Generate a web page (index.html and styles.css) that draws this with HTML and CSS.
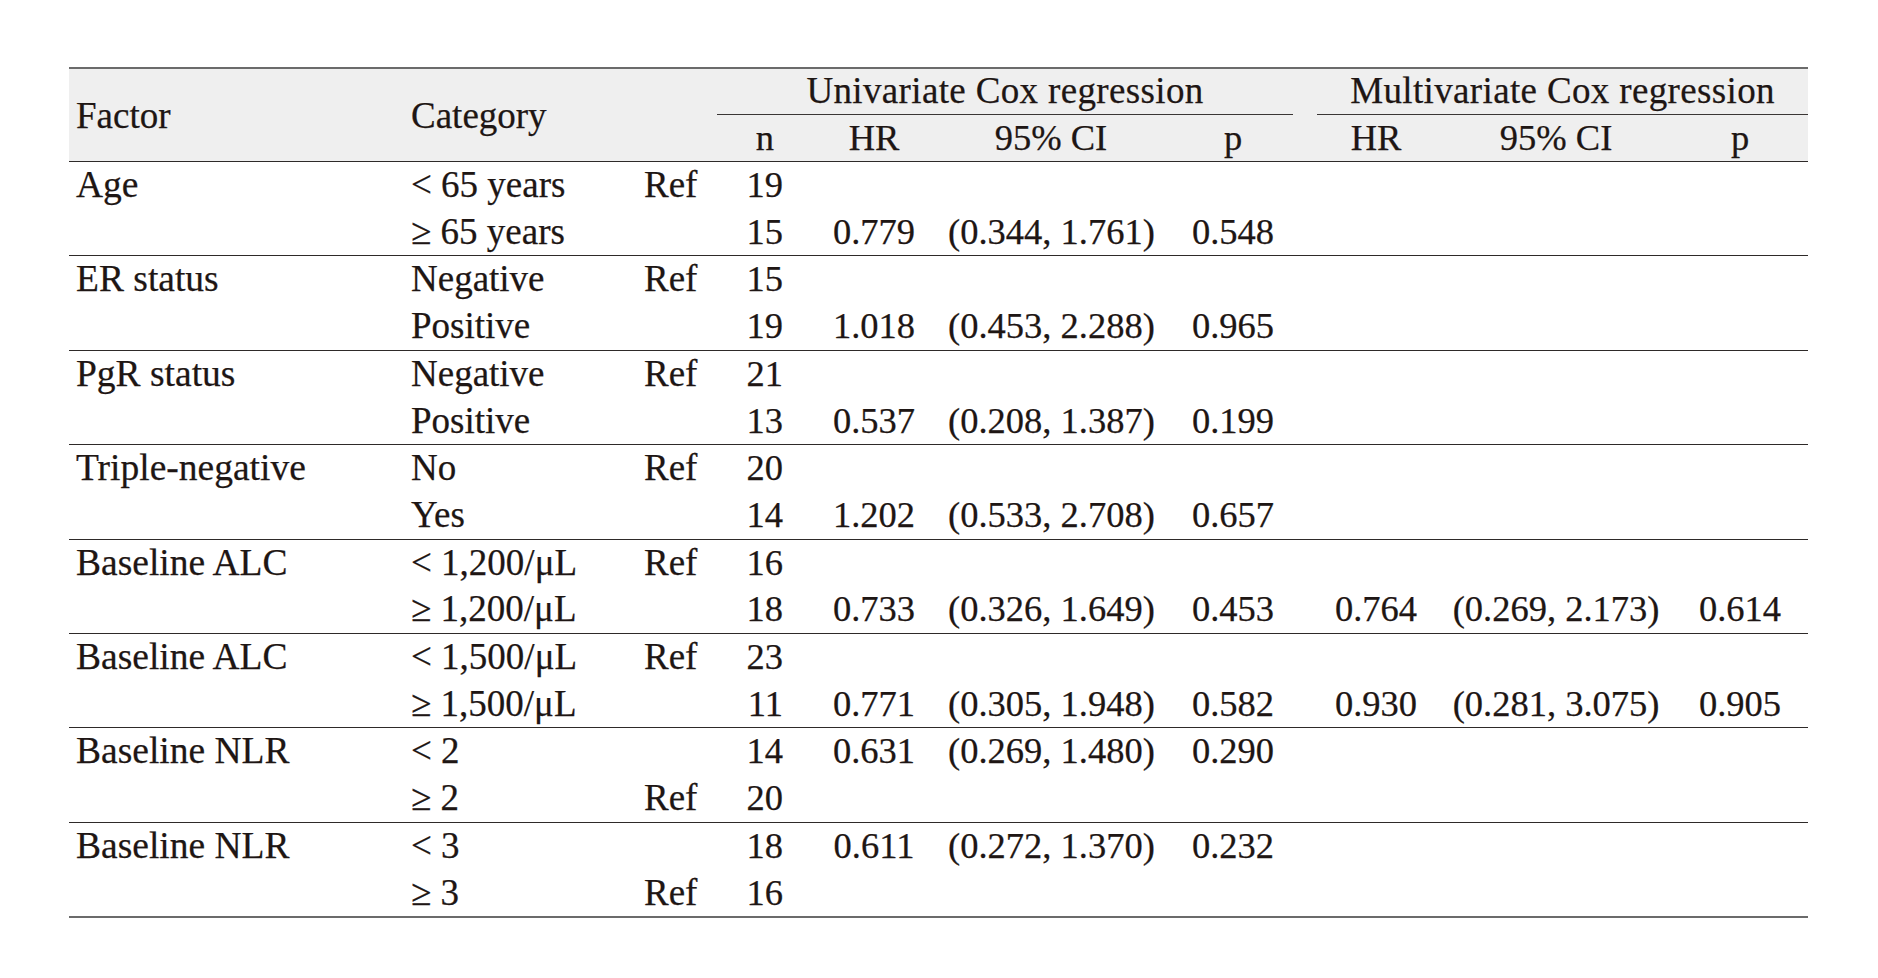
FILE: index.html
```html
<!DOCTYPE html>
<html lang="en">
<head>
<meta charset="utf-8">
<title>Cox regression table</title>
<link rel="stylesheet" href="styles.css">
</head>
<body>
<div class="page">
<table class="cox">
  <colgroup>
    <col class="c-factor"><col class="c-cat"><col class="c-ref"><col class="c-n">
    <col class="c-hr"><col class="c-ci"><col class="c-p">
    <col class="c-mhr"><col class="c-mci"><col class="c-mp">
  </colgroup>
  <thead>
    <tr class="h1">
      <th rowspan="2" class="lab factor">Factor</th>
      <th rowspan="2" class="lab cat">Category</th>
      <th rowspan="2" class="lab"></th>
      <th colspan="4" class="grp"><div class="grp-line uni">Univariate Cox regression</div></th>
      <th colspan="3" class="grp"><div class="grp-line multi">Multivariate Cox regression</div></th>
    </tr>
    <tr class="h2">
      <th class="num-n">n</th>
      <th>HR</th>
      <th>95% CI</th>
      <th class="p-uni">p</th>
      <th>HR</th>
      <th>95% CI</th>
      <th>p</th>
    </tr>
  </thead>
  <tbody>
    <tr><td class="factor">Age</td><td class="cat">&lt; 65 years</td><td class="ref">Ref</td><td class="n">19</td><td></td><td></td><td class="p-uni"></td><td></td><td></td><td></td></tr>
    <tr class="end"><td class="factor"></td><td class="cat">&ge; 65 years</td><td class="ref"></td><td class="n">15</td><td>0.779</td><td>(0.344, 1.761)</td><td class="p-uni">0.548</td><td></td><td></td><td></td></tr>

    <tr><td class="factor">ER status</td><td class="cat">Negative</td><td class="ref">Ref</td><td class="n">15</td><td></td><td></td><td class="p-uni"></td><td></td><td></td><td></td></tr>
    <tr class="end"><td class="factor"></td><td class="cat">Positive</td><td class="ref"></td><td class="n">19</td><td>1.018</td><td>(0.453, 2.288)</td><td class="p-uni">0.965</td><td></td><td></td><td></td></tr>

    <tr><td class="factor">PgR status</td><td class="cat">Negative</td><td class="ref">Ref</td><td class="n">21</td><td></td><td></td><td class="p-uni"></td><td></td><td></td><td></td></tr>
    <tr class="end"><td class="factor"></td><td class="cat">Positive</td><td class="ref"></td><td class="n">13</td><td>0.537</td><td>(0.208, 1.387)</td><td class="p-uni">0.199</td><td></td><td></td><td></td></tr>

    <tr><td class="factor">Triple-negative</td><td class="cat">No</td><td class="ref">Ref</td><td class="n">20</td><td></td><td></td><td class="p-uni"></td><td></td><td></td><td></td></tr>
    <tr class="end"><td class="factor"></td><td class="cat">Yes</td><td class="ref"></td><td class="n">14</td><td>1.202</td><td>(0.533, 2.708)</td><td class="p-uni">0.657</td><td></td><td></td><td></td></tr>

    <tr><td class="factor">Baseline ALC</td><td class="cat">&lt; 1,200/μL</td><td class="ref">Ref</td><td class="n">16</td><td></td><td></td><td class="p-uni"></td><td></td><td></td><td></td></tr>
    <tr class="end"><td class="factor"></td><td class="cat">&ge; 1,200/μL</td><td class="ref"></td><td class="n">18</td><td>0.733</td><td>(0.326, 1.649)</td><td class="p-uni">0.453</td><td>0.764</td><td>(0.269, 2.173)</td><td>0.614</td></tr>

    <tr><td class="factor">Baseline ALC</td><td class="cat">&lt; 1,500/μL</td><td class="ref">Ref</td><td class="n">23</td><td></td><td></td><td class="p-uni"></td><td></td><td></td><td></td></tr>
    <tr class="end"><td class="factor"></td><td class="cat">&ge; 1,500/μL</td><td class="ref"></td><td class="n">11</td><td>0.771</td><td>(0.305, 1.948)</td><td class="p-uni">0.582</td><td>0.930</td><td>(0.281, 3.075)</td><td>0.905</td></tr>

    <tr><td class="factor">Baseline NLR</td><td class="cat">&lt; 2</td><td class="ref"></td><td class="n">14</td><td>0.631</td><td>(0.269, 1.480)</td><td class="p-uni">0.290</td><td></td><td></td><td></td></tr>
    <tr class="end"><td class="factor"></td><td class="cat">&ge; 2</td><td class="ref">Ref</td><td class="n">20</td><td></td><td></td><td class="p-uni"></td><td></td><td></td><td></td></tr>

    <tr><td class="factor">Baseline NLR</td><td class="cat">&lt; 3</td><td class="ref"></td><td class="n">18</td><td>0.611</td><td>(0.272, 1.370)</td><td class="p-uni">0.232</td><td></td><td></td><td></td></tr>
    <tr class="end last"><td class="factor"></td><td class="cat">&ge; 3</td><td class="ref">Ref</td><td class="n">16</td><td></td><td></td><td class="p-uni"></td><td></td><td></td><td></td></tr>
  </tbody>
</table>
</div>
</body>
</html>
```

FILE: styles.css
```css
html, body {
  margin: 0;
  padding: 0;
  background: #ffffff;
}

.page {
  padding: 67px 0 0 69px;
}

.cox {
  width: 1739px;
  table-layout: fixed;
  border-collapse: separate;
  border-spacing: 0;
  font-family: "Liberation Serif", "Times New Roman", serif;
  font-size: 36.5px;
  color: #1e1614;
  -webkit-text-stroke: 0.25px #1e1614;
}

.c-factor { width: 334px; }
.c-cat { width: 237px; }
.c-ref { width: 77px; }
.c-n { width: 83px; }
.c-hr { width: 148px; }
.c-ci { width: 206px; }
.c-p { width: 158px; }
.c-mhr { width: 128px; }
.c-mci { width: 232px; }
.c-mp { width: 136px; }

.cox th,
.cox td {
  padding: 0;
  font-weight: normal;
  white-space: nowrap;
  text-align: center;
}

.cox thead th {
  background: #efefef;
}

.h1 th {
  border-top: 2px solid #6b6b6b;
  vertical-align: bottom;
}

.h1 th.lab {
  vertical-align: middle;
  border-bottom: 1.5px solid #2e2a29;
  line-height: 47px;
  text-align: left;
  font-size: 37px;
}

.h1 th.factor { padding-left: 7px; }
.h1 th.cat { padding-left: 8px; }

.grp-line {
  line-height: 44.5px;
  border-bottom: 1.5px solid #3a3635;
  letter-spacing: 0.35px;
  font-size: 37px;
}

.grp-line.uni { margin-right: 19px; }
.grp-line.multi { margin-left: 5px; }

.h2 th {
  line-height: 46.5px;
  border-bottom: 1.5px solid #2e2a29;
}

.h2 th.num-n {
  text-align: right;
  padding-right: 26px;
}

.cox tbody td {
  line-height: 46.7px;
}

.cox td.factor {
  text-align: left;
  padding-left: 7px;
  font-size: 37.5px;
}

.cox td.cat {
  text-align: left;
  padding-left: 8px;
  font-size: 37px;
}

.cox td.ref {
  text-align: left;
  padding-left: 4px;
  font-size: 37px;
}

.cox td.n {
  text-align: right;
  padding-right: 17px;
}

.cox tr.end td {
  border-bottom: 1.5px solid #2e2a29;
}

.cox tr.end.last td {
  border-bottom: 2px solid #6b6b6b;
}
```
